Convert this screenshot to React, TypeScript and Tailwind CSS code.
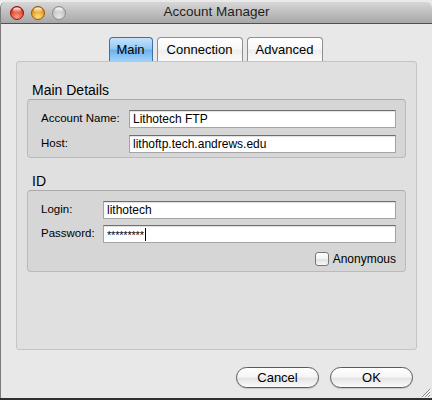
import React from "react";

const font = { fontFamily: '"Liberation Sans", Arial, sans-serif' };

function Light({ rim, body, glow }: { rim: string; body: string; glow: string }) {
  return (
    <svg width="14" height="14" viewBox="0 0 14 14">
      <defs>
        <radialGradient id={`g${body}`} cx="50%" cy="80%" r="65%">
          <stop offset="0%" stopColor={glow} />
          <stop offset="100%" stopColor={body} />
        </radialGradient>
        <linearGradient id={`h${body}`} x1="0" y1="0" x2="0" y2="1">
          <stop offset="0%" stopColor="#fff" stopOpacity="0.95" />
          <stop offset="100%" stopColor="#fff" stopOpacity="0" />
        </linearGradient>
      </defs>
      <circle cx="7" cy="7" r="6.5" fill={`url(#g${body})`} stroke={rim} strokeWidth="1" />
      <ellipse cx="7" cy="4.2" rx="4" ry="2.6" fill={`url(#h${body})`} />
    </svg>
  );
}

function Tab({ label, active, w }: { label: string; active?: boolean; w: string }) {
  return (
    <div
      className={`${w} h-[24px] flex items-center justify-center pt-[1px] text-[13px] text-black rounded-t-[4px] border border-b-0 ${
        active
          ? "border-[#3f6fa8] bg-[linear-gradient(#c6e3fb,#92c8f4_48%,#6bb1ef_52%,#9fd2fa)]"
          : "border-[#8f8f8f] bg-[linear-gradient(#ffffff,#f8f8f8_48%,#eeeeee_52%,#fafafa)]"
      }`}
    >
      {label}
    </div>
  );
}

function Field({ children }: { children?: React.ReactNode }) {
  return (
    <div className="flex-1 h-[18px] bg-white border border-[#a4a4a4] border-t-[#6e6e6e] shadow-[inset_0_1px_1px_rgba(0,0,0,0.12)] flex items-center pl-[3px] text-[12px] text-black leading-none">
      {children}
    </div>
  );
}

function Row({ label, lw, children }: { label: string; lw: string; children?: React.ReactNode }) {
  return (
    <div className="flex items-center">
      <div className={`${lw} text-[11.5px] text-black`}>{label}</div>
      <Field>{children}</Field>
    </div>
  );
}

function Button({ label }: { label: string }) {
  return (
    <div className="w-[83px] h-[21px] rounded-full border border-[#5b5b5b] bg-[linear-gradient(#ffffff,#f6f6f6_45%,#e4e4e4_55%,#fbfbfb)] shadow-[0_1px_1px_rgba(0,0,0,0.15)] flex items-center justify-center text-[13px] text-black">
      {label}
    </div>
  );
}

export default function App() {
  return (
    <div className="w-[432px] h-[400px] bg-[#eaeaea] flex flex-col overflow-hidden" style={font}>
      <div className="h-[2px] shrink-0" />
      <div className="relative h-[396px] shrink-0 flex flex-col bg-[#e8e8e8] border-l border-[#7a7a7a] rounded-t-[6px] overflow-hidden">
        {/* title bar */}
        <div className="h-[22px] shrink-0 grid grid-cols-[1fr_auto_1fr] items-center bg-[linear-gradient(#d7d7d7,#a7a7a7)] border-b border-[#515151]">
          <div className="flex items-center gap-[7px] pl-[9px] pt-[1px]">
            <Light rim="#8c1a12" body="#d8321f" glow="#ff9c88" />
            <Light rim="#9a5a0a" body="#e08a12" glow="#ffe27a" />
            <Light rim="#8d8d8d" body="#bdbdbd" glow="#e8e8e8" />
          </div>
          <div className="text-[13.5px] text-[#1e1e1e]">Account Manager</div>
          <div />
        </div>

        {/* tabs */}
        <div className="flex justify-center gap-[4px] pt-[13px] pr-[2px]">
          <Tab label="Main" active w="w-[44px]" />
          <Tab label="Connection" w="w-[86px]" />
          <Tab label="Advanced" w="w-[76px]" />
        </div>

        {/* tab panel */}
        <div className="mx-[15px] h-[289px] shrink-0 bg-[#e0e0e0] border border-[#c4c4c4] rounded-[3px] px-[10px] pt-[20px]">
          <div className="h-[16px] leading-[16px] text-[14px] text-black pl-[5px]">Main Details</div>
          <div className="mt-[1px] h-[59px] bg-[#d6d6d6] border border-[#bababa] border-t-[#a9a9a9] rounded-[4px] pl-[13px] pr-[9px] pt-[10px] flex flex-col gap-[7px]">
            <Row label="Account Name:" lw="w-[88px]">Lithotech FTP</Row>
            <Row label="Host:" lw="w-[88px]">lithoftp.tech.andrews.edu</Row>
          </div>

          <div className="mt-[15px] h-[16px] leading-[16px] text-[14px] text-black pl-[5px]">ID</div>
          <div className="mt-[1px] h-[82px] bg-[#d6d6d6] border border-[#bababa] border-t-[#a9a9a9] rounded-[4px] pl-[13px] pr-[9px] pt-[10px] flex flex-col">
            <Row label="Login:" lw="w-[62px]">lithotech</Row>
            <div className="mt-[6px]">
              <Row label="Password:" lw="w-[62px]">
                <span className="text-[11px] tracking-[-0.2px] pt-[3px]">*********</span>
                <span className="ml-[1px] w-[1px] h-[13px] bg-black" />
              </Row>
            </div>
            <div className="mt-[9px] flex items-center justify-end gap-[4px]">
              <div className="w-[14px] h-[14px] rounded-[3px] border border-[#777777] bg-[linear-gradient(#ffffff,#f3f3f3_50%,#e2e2e2_55%,#f8f8f8)]" />
              <div className="text-[12px] text-black leading-none">Anonymous</div>
            </div>
          </div>
        </div>

        {/* buttons */}
        <div className="mt-[17px] flex justify-end gap-[11px] pr-[19px]">
          <Button label="Cancel" />
          <Button label="OK" />
        </div>

        {/* resize grip */}
        <svg className="absolute right-[1px] bottom-0" width="11" height="11" viewBox="0 0 11 11">
          <path d="M10 2 L2 10 M10 5 L5 10 M10 8 L8 10" stroke="#8a8a8a" strokeWidth="1" />
          <path d="M11 3 L3 11 M11 6 L6 11 M11 9 L9 11" stroke="#ffffff" strokeWidth="1" />
        </svg>
      </div>
      <div className="h-[2px] shrink-0 bg-[#2e2e2e]" />
    </div>
  );
}
